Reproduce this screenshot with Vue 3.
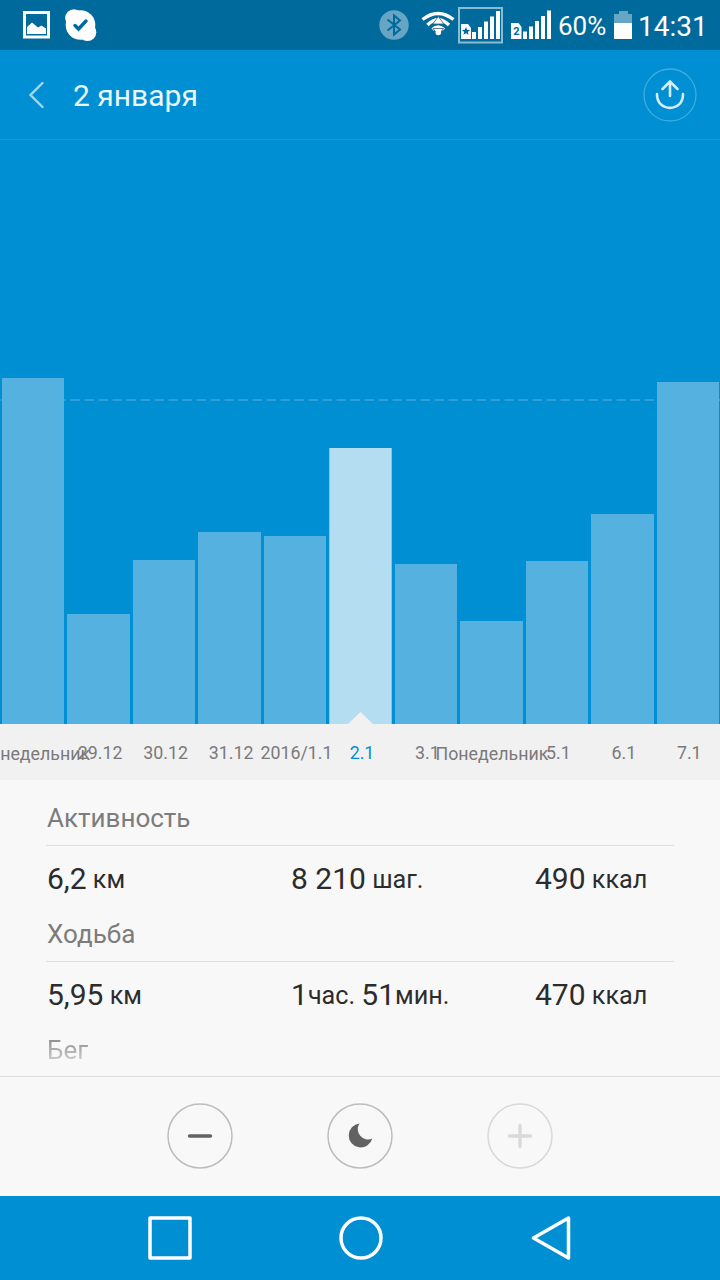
<script setup>
import { ref } from "vue";

const days = ref([
  { label: "Понедельник", height: 346 },
  { label: "29.12", height: 110 },
  { label: "30.12", height: 164.5 },
  { label: "31.12", height: 192.5 },
  { label: "2016/1.1", height: 188.5 },
  { label: "2.1", height: 276 },
  { label: "3.1", height: 160 },
  { label: "Понедельник", height: 103 },
  { label: "5.1", height: 163.5 },
  { label: "6.1", height: 210.5 },
  { label: "7.1", height: 342.5 },
]);

const selected = ref(5);

const sections = [
  {
    title: "Активность",
    values: [
      [["6,2", " км"]],
      [["8 210", " шаг."]],
      [["490", " ккал"]],
    ],
  },
  {
    title: "Ходьба",
    values: [
      [["5,95", " км"]],
      [["1", "час. "], ["51", "мин."]],
      [["470", " ккал"]],
    ],
  },
];
</script>

<template>
  <div class="screen">
    <div class="status">
      <svg class="picture" width="28" height="28" viewBox="0 0 28 28">
        <rect x="1.5" y="1.5" width="24" height="24.500" fill="none" stroke="#fff" stroke-width="3" />
        <path d="M4 23v-7l5-4.500 6 5 3.500-2 4.500 3V23z" fill="#fff" />
      </svg>
      <svg class="skype" width="32" height="32" viewBox="0 0 32 32">
        <circle cx="15.500" cy="16" r="14.800" fill="#fff" />
        <circle cx="9" cy="9" r="8.800" fill="#fff" />
        <circle cx="22.500" cy="23.200" r="8.800" fill="#fff" />
        <path d="M10 16.500l3.500 3.500 7.500-8" fill="none" stroke="#006a9c" stroke-width="3.400" stroke-linecap="round" />
      </svg>
      <svg class="bluetooth" width="30" height="30" viewBox="0 0 30 30">
        <circle cx="15" cy="15" r="14.700" fill="#66a6c4" />
        <path d="M8.500 9.500l12.500 10-6 5V5.500l6 5-12.500 10" fill="none" stroke="#006a9c" stroke-width="2" />
      </svg>
      <svg class="wifi" width="34" height="28" viewBox="0 0 34 28">
        <g fill="none" stroke="#fff" stroke-width="3.400">
          <path d="M1.500 8.500Q17-3.500 32.500 8.500" />
          <path d="M6.500 14Q17 3.500 28 14" />
          <path d="M11.500 18.500Q17 13.500 23 18.500" />
        </g>
        <path d="M17.300 5.500l5.500 7.500h-11zM17.300 24l-5.300-6.500h10.600z" fill="#fff" stroke="#355f76" stroke-width=".8" />
        <circle cx="17.300" cy="21.500" r="2.800" fill="#fff" />
      </svg>
      <svg class="sim1" width="45" height="37" viewBox="0 0 45 37">
        <rect x="1" y="1" width="43" height="34.500" fill="none" stroke="#8abbd2" stroke-width="2" />
        <path d="M3 32V17h7l3 4v11zM14 25h4v7h-4zM20 20h4v12h-4zM26 14.500h4V32h-4zM32 9.500h4V32h-4zM38 4h4v28h-4z" fill="#fff" />
        <path d="M8 20l1.100 2.800 3 .2-2.300 1.900.8 2.900L8 26.200l-2.600 1.600.8-2.900-2.300-1.900 3-.2z" fill="#006a9c" />
      </svg>
      <svg class="sim2" width="41" height="30" viewBox="0 0 41 30">
        <path d="M0 29V13h7.500l3 4v12zM12 21.500h4V29h-4zM18 16.500h4V29h-4zM24 11h4v18h-4zM30 6h4v23h-4zM36 .5h4V29h-4z" fill="#fff" />
        <text x="2.200" y="25.300" font-size="11" font-weight="700" fill="#006a9c">2</text>
      </svg>
      <span class="percent">60%</span>
      <svg class="battery" width="18" height="28" viewBox="0 0 18 28">
        <path d="M0 12V3h5V0h9v3h4v9z" fill="#66a6c4" />
        <path d="M0 12h18v16H0z" fill="#fff" />
      </svg>
      <span class="clock">14:31</span>
    </div>

    <div class="header">
      <svg class="back" width="18" height="28" viewBox="0 0 18 28">
        <path d="M15.500 2L3.500 14l12 12" fill="none" stroke="#a3d5ee" stroke-width="2.400" stroke-linecap="round" />
      </svg>
      <h1>2 января</h1>
      <svg class="share" width="54" height="54" viewBox="0 0 54 54">
        <circle cx="27" cy="27" r="26" fill="none" stroke="#3facdf" stroke-width="1.300" />
        <path d="M14 26c-.5 18.500 26.500 18.500 26 0M27 28V13.500M19.500 21L27 13.500l7.500 7.500" fill="none" stroke="#d6edf8" stroke-width="2.600" stroke-linecap="round" />
      </svg>
    </div>

    <div class="chart">
      <svg class="goal" width="720" height="2" viewBox="0 0 720 2">
        <path d="M0 1h720" stroke="#2e9fd8" stroke-width="2" stroke-dasharray="9.500 4.500" stroke-dashoffset="-.5" />
      </svg>
      <div v-for="(day, i) in days" :key="i" class="column" @click="selected = i">
        <div class="bar" :class="{ active: i === selected }" :style="{ height: day.height + 'px' }"></div>
      </div>
    </div>

    <div class="labels">
      <div v-for="(day, i) in days" :key="i" class="label" :class="{ active: i === selected }">
        <span :class="{ word: day.label === 'Понедельник' }">{{ day.label }}</span>
      </div>
    </div>

    <div class="details">
      <section v-for="section in sections" :key="section.title">
        <h2>{{ section.title }}</h2>
        <div class="values">
          <div v-for="(value, i) in section.values" :key="i" class="value">
            <template v-for="part in value" :key="part[0]">{{ part[0] }}<small>{{ part[1] }}</small></template>
          </div>
        </div>
      </section>
      <section>
        <h2 class="faded">Бег</h2>
      </section>
    </div>

    <div class="actions">
      <button>
        <svg width="66" height="66" viewBox="0 0 66 66">
          <circle cx="33" cy="33" r="32" fill="none" stroke="#bcbcbc" stroke-width="1.500" />
          <path d="M22.500 33h21" stroke="#626262" stroke-width="3.400" stroke-linecap="round" />
        </svg>
      </button>
      <button>
        <svg width="66" height="66" viewBox="0 0 66 66">
          <circle cx="33" cy="33" r="32" fill="none" stroke="#bcbcbc" stroke-width="1.500" />
          <path d="M32.500 20.500A12 12 0 1 0 45.300 35.600A10.300 10.300 0 0 1 32.500 20.500z" fill="#626262" />
        </svg>
      </button>
      <button>
        <svg width="66" height="66" viewBox="0 0 66 66">
          <circle cx="33" cy="33" r="32" fill="none" stroke="#d9d9d9" stroke-width="1.500" />
          <path d="M22.500 33h21M33 22.500v21" stroke="#d9d9d9" stroke-width="3.400" stroke-linecap="round" />
        </svg>
      </button>
    </div>

    <div class="nav">
      <svg width="44" height="44" viewBox="0 0 44 44">
        <rect x="2" y="2" width="40" height="40" />
      </svg>
      <svg width="44" height="44" viewBox="0 0 44 44">
        <circle cx="22" cy="22" r="20" />
      </svg>
      <svg width="44" height="44" viewBox="0 0 44 44">
        <path d="M38.500 2v40L3.500 22z" />
      </svg>
    </div>
  </div>
</template>

<style>
body {
  margin: 0;
}
</style>

<style scoped>
.screen {
  width: 720px;
  height: 1280px;
  display: flex;
  flex-direction: column;
  overflow: hidden;
  background: #f8f8f8;
  font-family: Roboto, "Noto Sans", sans-serif;
  color: #2c2c2c;
}

svg {
  display: block;
  flex: none;
}

.status {
  height: 50px;
  flex: none;
  display: flex;
  align-items: center;
  background: #006a9c;
  color: #fff;
  white-space: nowrap;
}

.picture {
  margin-left: 23px;
}

.skype {
  margin-left: 14px;
}

.bluetooth {
  margin-left: 282px;
}

.wifi {
  margin-left: 12px;
}

.sim1 {
  margin-left: 3px;
}

.sim2 {
  margin-left: 8px;
}

.percent {
  width: 56px;
  margin-left: 6px;
  font-size: 26px;
  line-height: 50px;
  padding-top: 2px;
}

.clock {
  margin-left: 6px;
  font-size: 28px;
  line-height: 50px;
  padding-top: 4px;
}

.header {
  height: 89px;
  flex: none;
  display: flex;
  align-items: center;
  background: #008fd3;
  border-bottom: 1px solid #1397d6;
}

.back {
  margin-left: 27px;
}

h1 {
  margin: 2px 0 0 28px;
  font-size: 30px;
  font-weight: 400;
  color: #ebf6fc;
}

.share {
  margin: 0 23px 0 auto;
}

.chart {
  position: relative;
  height: 584px;
  flex: none;
  display: grid;
  grid-template-columns: repeat(11, 1fr);
  align-items: end;
  background: #008fd3;
}

/* daily goal, runs behind the bars */
.goal {
  position: absolute;
  left: 0;
  top: 259px;
}

.column {
  position: relative;
  padding: 0 1px 0 2px;
}

.bar {
  background: #55b1df;
}

.bar.active {
  background: #b4ddf1;
  clip-path: polygon(0 0, 100% 0, 100% 100%, calc(50% + 12.5px) 100%, 50% calc(100% - 12px), calc(50% - 12.5px) 100%, 0 100%);
}

.column:has(.active) {
  background: linear-gradient(#f1f1f1, #f1f1f1) center bottom / 26px 12px no-repeat;
}

.labels {
  height: 56px;
  flex: none;
  display: grid;
  grid-template-columns: repeat(11, minmax(0, 1fr));
  background: #f1f1f1;
}

.label {
  display: flex;
  justify-content: center;
  padding-left: 4px;
  font-size: 17.8px;
  line-height: 58px;
  white-space: nowrap;
  color: #7a7a7a;
}

.word {
  padding-top: 1px;
  margin-left: -2px;
}

.label.active {
  color: #008fd3;
}

.details {
  height: 296px;
  flex: none;
  overflow: hidden;
  padding: 0 46px;
  border-bottom: 1px solid #dcdcdc;
}

section {
  height: 116px;
}

h2 {
  height: 65px;
  margin: 0;
  padding-left: 1px;
  font-size: 26px;
  font-weight: 400;
  line-height: 77px;
  color: #7c7c7c;
  border-bottom: 1px solid #dedede;
}

.faded {
  border: 0;
  color: transparent;
  background: linear-gradient(#858585 24px, #b4b4b4 40px, #d4d4d4 52px, #f8f8f8 70px);
  background-clip: text;
}

.values {
  display: grid;
  grid-template-columns: 244px 244px 1fr;
  padding-left: 1px;
}

.value {
  font-size: 30px;
  line-height: 50px;
  padding-top: 8px;
  height: 42px;
  white-space: pre;
}

.value small {
  position: relative;
  top: -1px;
  font-size: 25.2px;
}

.actions {
  height: 117px;
  padding-bottom: 2px;
  flex: none;
  display: flex;
  justify-content: center;
  align-items: center;
  gap: 94px;
}

button {
  padding: 0;
  border: 0;
  background: none;
}

.nav {
  height: 84px;
  padding-left: 1px;
  flex: none;
  display: flex;
  justify-content: center;
  align-items: center;
  gap: 147px;
  background: #008fd3;
}

.nav svg {
  fill: none;
  stroke: #fff;
  stroke-width: 3.5px;
  stroke-linejoin: round;
}
</style>
